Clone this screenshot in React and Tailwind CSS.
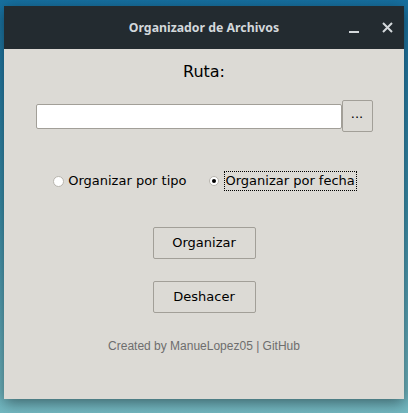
export default function App() {
  return (
    <div className="w-[408px] h-[413px] overflow-hidden bg-gradient-to-b from-[#1670a0] via-[#3a8fab] to-[#74b9c2] pt-[6px] px-[4px]">
      <div className="w-[400px] h-[393px] flex flex-col bg-[#dcdad5] shadow-[0_4px_14px_rgba(0,0,0,0.45)]" style={{ fontFamily: '"DejaVu Sans", sans-serif' }}>
        {/* title bar */}
        <div className="h-[43px] bg-[#232b30] flex items-center relative">
          <div className="w-full text-center text-[12.3px] font-bold text-[#d3d8db] pt-[1px]" style={{ fontFamily: '"Noto Sans", sans-serif' }}>
            Organizador de Archivos
          </div>
          <div className="absolute right-[11px] top-[16px] flex items-center gap-[23px]">
            <div className="w-[10px] h-[2px] bg-[#d3d8db] mt-[9px]" />
            <svg width="11" height="11" viewBox="0 0 11 11">
              <path d="M1 1 L10 10 M10 1 L1 10" stroke="#d3d8db" strokeWidth="2" />
            </svg>
          </div>
        </div>

        {/* body */}
        <div className="flex flex-col items-center pt-[13px]">
          <div className="text-[16px] text-black leading-[20px]">Ruta:</div>

          <div className="flex items-center mt-[18px]">
            <div className="w-[306px] h-[25px] bg-white border border-[#a29f98] rounded-[2px]" />
            <div className="w-[31px] h-[32px] border border-[#a29f98] rounded-[2px] bg-[#dcdad5] flex items-center justify-center text-[13px] text-black pb-[4px]">
              ...
            </div>
          </div>

          <div className="flex items-center mt-[39px] text-[13px] text-black ml-[2px]">
            <div className="flex items-center">
              <div className="w-[11px] h-[11px] rounded-full bg-white border border-[#b8b5ae]" />
              <span className="ml-[4px]">Organizar por tipo</span>
            </div>
            <div className="flex items-center ml-[22px]">
              <div className="w-[10px] h-[10px] rounded-full bg-white border border-[#b8b5ae] flex items-center justify-center">
                <div className="w-[4px] h-[4px] rounded-full bg-black" />
              </div>
              <span className="ml-[5px] px-[1px] border border-dotted border-black leading-[18px]">Organizar por fecha</span>
            </div>
          </div>

          <div className="mt-[36px] w-[103px] h-[32px] border border-[#a29f98] rounded-[2px] flex items-center justify-center text-[13px] text-black">
            Organizar
          </div>
          <div className="mt-[22px] w-[103px] h-[32px] border border-[#a29f98] rounded-[2px] flex items-center justify-center text-[13px] text-black">
            Deshacer
          </div>

          <div className="mt-[24px] text-[12px] text-[#6e6e6e]" style={{ fontFamily: '"Liberation Sans", sans-serif' }}>
            Created by ManueLopez05 | GitHub
          </div>
        </div>
      </div>
    </div>
  );
}
